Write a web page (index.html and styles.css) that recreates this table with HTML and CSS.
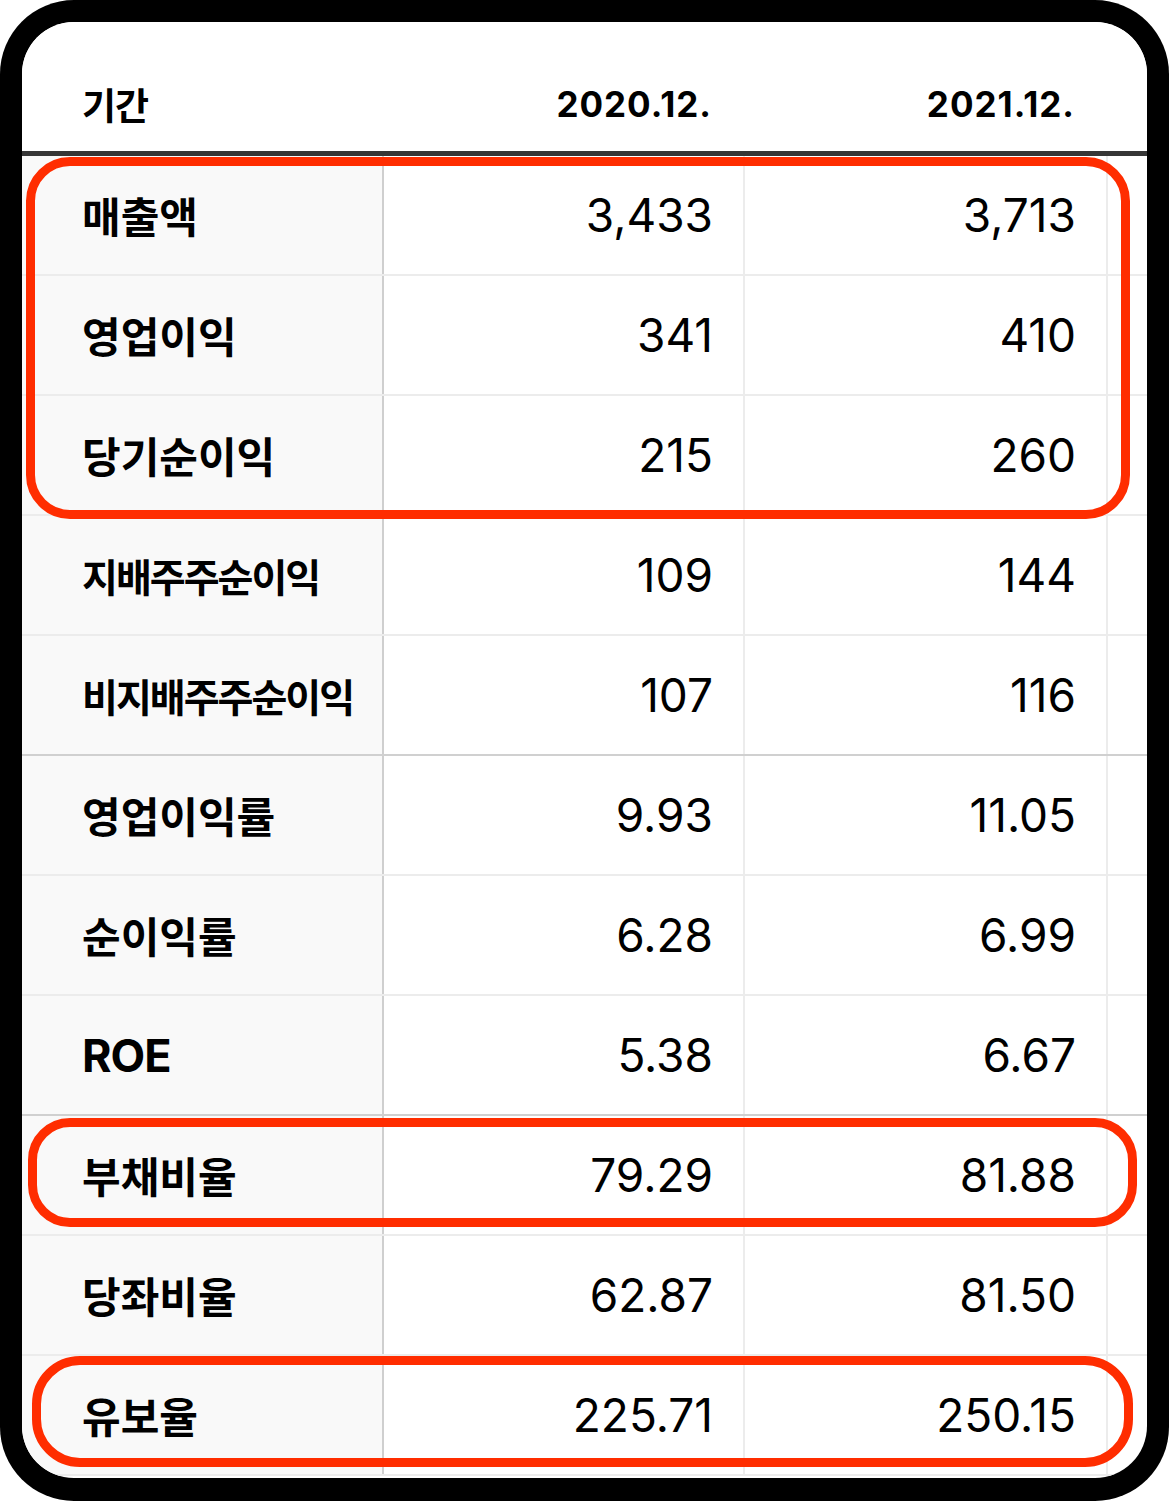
FILE: index.html
```html
<!DOCTYPE html>
<html lang="ko">
<head>
<meta charset="utf-8">
<title>재무 요약</title>
<link rel="stylesheet" href="styles.css">
</head>
<body>
<div class="device">
  <div class="screen">
    <div class="table">
      <div class="row head">
        <div class="cell c1"><span class="hlabel">기간</span></div>
        <div class="cell c2"><span class="hnum">2020.12.</span></div>
        <div class="cell c3"><span class="hnum">2021.12.</span></div>
        <div class="cell c4"></div>
      </div>
      <div class="row">
        <div class="cell c1"><span class="label">매출액</span></div>
        <div class="cell c2 num">3,433</div>
        <div class="cell c3 num">3,713</div>
        <div class="cell c4"></div>
      </div>
      <div class="row">
        <div class="cell c1"><span class="label">영업이익</span></div>
        <div class="cell c2 num">341</div>
        <div class="cell c3 num">410</div>
        <div class="cell c4"></div>
      </div>
      <div class="row">
        <div class="cell c1"><span class="label">당기순이익</span></div>
        <div class="cell c2 num">215</div>
        <div class="cell c3 num">260</div>
        <div class="cell c4"></div>
      </div>
      <div class="row">
        <div class="cell c1"><span class="label tight">지배주주순이익</span></div>
        <div class="cell c2 num">109</div>
        <div class="cell c3 num">144</div>
        <div class="cell c4"></div>
      </div>
      <div class="row sep">
        <div class="cell c1"><span class="label tight">비지배주주순이익</span></div>
        <div class="cell c2 num">107</div>
        <div class="cell c3 num">116</div>
        <div class="cell c4"></div>
      </div>
      <div class="row">
        <div class="cell c1"><span class="label">영업이익률</span></div>
        <div class="cell c2 num">9.93</div>
        <div class="cell c3 num">11.05</div>
        <div class="cell c4"></div>
      </div>
      <div class="row">
        <div class="cell c1"><span class="label">순이익률</span></div>
        <div class="cell c2 num">6.28</div>
        <div class="cell c3 num">6.99</div>
        <div class="cell c4"></div>
      </div>
      <div class="row sep">
        <div class="cell c1"><span class="label latin">ROE</span></div>
        <div class="cell c2 num">5.38</div>
        <div class="cell c3 num">6.67</div>
        <div class="cell c4"></div>
      </div>
      <div class="row">
        <div class="cell c1"><span class="label">부채비율</span></div>
        <div class="cell c2 num">79.29</div>
        <div class="cell c3 num">81.88</div>
        <div class="cell c4"></div>
      </div>
      <div class="row">
        <div class="cell c1"><span class="label">당좌비율</span></div>
        <div class="cell c2 num">62.87</div>
        <div class="cell c3 num">81.50</div>
        <div class="cell c4"></div>
      </div>
      <div class="row">
        <div class="cell c1"><span class="label">유보율</span></div>
        <div class="cell c2 num">225.71</div>
        <div class="cell c3 num">250.15</div>
        <div class="cell c4"></div>
      </div>
    </div>
    <div class="mark mark-top"></div>
    <div class="mark mark-debt"></div>
    <div class="mark mark-retain"></div>
  </div>
</div>
</body>
</html>
```
FILE: styles.css
```css
html, body {
  margin: 0;
  padding: 0;
  background: #ffffff;
}

body {
  font-family: Inter, "Noto Sans CJK KR", sans-serif;
  color: #000;
}

.device {
  width: 1169px;
  height: 1501px;
  box-sizing: border-box;
  background: #000;
  border-radius: 74px;
  padding: 22px 22px 23px 22px;
}

.screen {
  position: relative;
  height: 100%;
  background: #fff;
  border-radius: 52px;
  overflow: hidden;
}

.table {
  display: flex;
  flex-direction: column;
}

.row {
  display: flex;
  height: 120px;
  box-sizing: border-box;
  border-bottom: 2px solid #ececec;
}

.row.sep {
  border-bottom-color: #d0d0d0;
}

.row.head {
  height: 134px;
  border-bottom: 5px solid #363636;
}

.cell {
  box-sizing: border-box;
  display: flex;
  align-items: center;
  flex: none;
}

.c1 {
  width: 362px;
  padding-left: 60px;
  background: #f9f9f9;
  border-right: 2px solid #cfcfcf;
}

.c2 {
  width: 361px;
  border-right: 2px solid #ececec;
}

.c3 {
  width: 363px;
  border-right: 2px solid #ececec;
}

.c4 {
  flex: 1;
}

.head .cell {
  background: #fff;
  border-right-color: transparent;
  padding-top: 35px;
}

.head .c2,
.head .c3 {
  justify-content: flex-end;
  padding-right: 31px;
}

.hlabel {
  font-family: "Noto Sans CJK KR", sans-serif;
  font-weight: 700;
  font-size: 37px;
  letter-spacing: -1px;
  line-height: 1;
}

.hnum {
  font-family: Inter, sans-serif;
  font-weight: 700;
  font-size: 35px;
  letter-spacing: 1px;
  line-height: 1;
}

.label {
  font-family: "Noto Sans CJK KR", sans-serif;
  font-weight: 700;
  font-size: 42px;
  letter-spacing: 0;
  line-height: 1;
}

.label.tight {
  font-size: 39px;
  letter-spacing: -2px;
}

.label.latin {
  font-family: Inter, sans-serif;
  font-size: 45px;
  letter-spacing: -1px;
}

.num {
  justify-content: flex-end;
  padding-right: 30px;
  font-family: Inter, sans-serif;
  font-weight: 400;
  font-size: 46px;
  letter-spacing: 0;
  line-height: 1;
}

.mark {
  position: absolute;
  box-sizing: border-box;
  border: 9px solid #ff2d00;
}

.mark-top {
  left: 4px;
  top: 135px;
  width: 1104px;
  height: 362px;
  border-radius: 44px;
}

.mark-debt {
  left: 6px;
  top: 1096px;
  width: 1109px;
  height: 109px;
  border-radius: 42px;
}

.mark-retain {
  left: 10px;
  top: 1334px;
  width: 1101px;
  height: 111px;
  border-radius: 48px;
}
```
